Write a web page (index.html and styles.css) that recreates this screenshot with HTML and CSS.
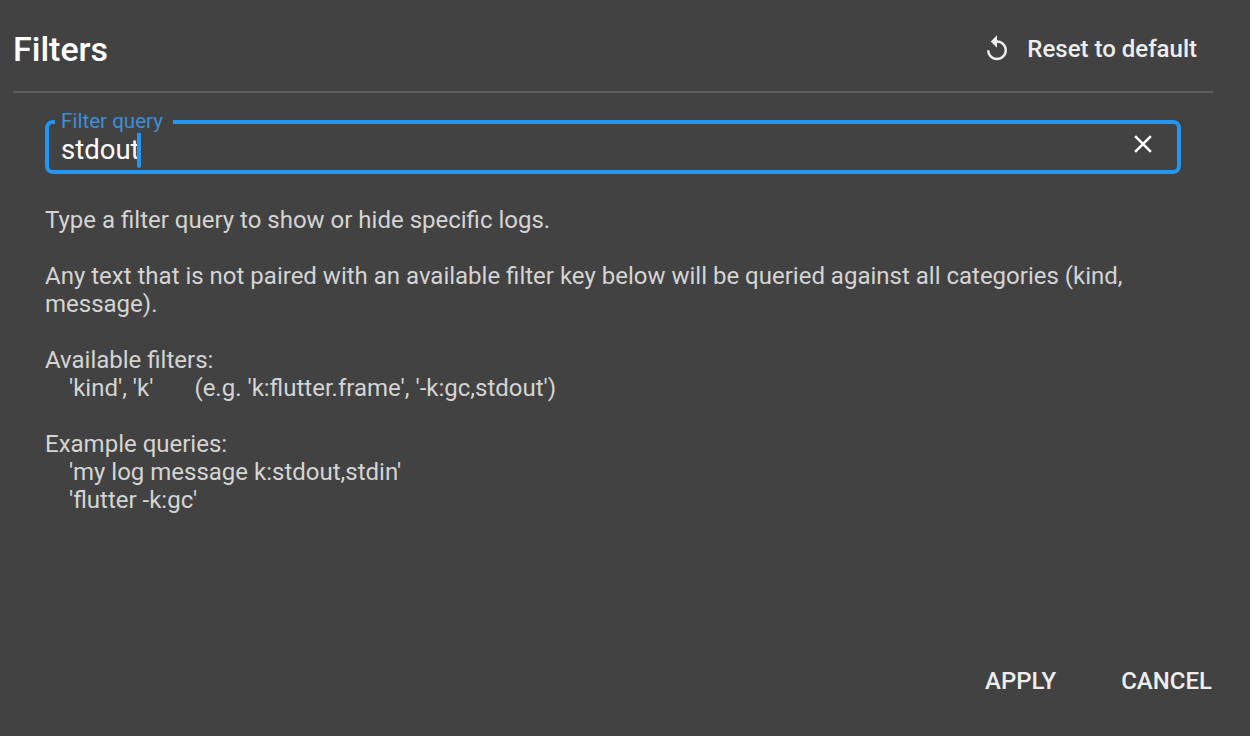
FILE: index.html
```html
<!DOCTYPE html>
<html lang="en">
<head>
  <meta charset="UTF-8" />
  <title>Filters</title>
  <link rel="stylesheet" href="styles.css">
</head>
<body>
  <div class="dialog">
    <div class="header">
      <h2>Filters</h2>
      <div class="reset">
        <svg class="reset-icon" viewBox="0 0 24 24" width="30" height="30"><path d="M12 5V1L7 6l5 5V7c3.31 0 6 2.69 6 6s-2.69 6-6 6-6-2.69-6-6H4c0 4.42 3.58 8 8 8s8-3.58 8-8-3.58-8-8-8z"/></svg>
        <span>Reset to default</span>
      </div>
    </div>
    <div class="content">
      <div class="field">
        <label class="field-label">Filter query</label>
        <div class="field-value"><span>stdout</span><i class="caret"></i></div>
        <svg class="clear-icon" viewBox="0 0 24 24" width="30" height="30"><path d="M19 6.41 17.59 5 12 10.59 6.41 5 5 6.41 10.59 12 5 17.59 6.41 19 12 13.41 17.59 19 19 17.59 13.41 12z"/></svg>
      </div>
      <div class="help">
        <p>Type a filter query to show or hide specific logs.</p>
        <p>Any text that is not paired with an available filter key below will be queried against all categories (kind, message).</p>
        <p>Available filters:<br><span class="indent">'kind', 'k'</span><span class="example">(e.g. 'k:flutter.frame', '-k:gc,stdout')</span></p>
        <p>Example queries:<br><span class="indent">'my log message k:stdout,stdin'</span><br><span class="indent">'flutter -k:gc'</span></p>
      </div>
    </div>
    <div class="actions">
      <button>APPLY</button>
      <button>CANCEL</button>
    </div>
  </div>
</body>
</html>
```

FILE: styles.css
```css
html, body {
  margin: 0;
  height: 100%;
}
body {
  background: #424242;
  font-family: Roboto, "Liberation Sans", sans-serif;
  color: #fff;
  overflow: hidden;
}
.dialog {
  height: 736px;
  box-sizing: border-box;
  padding: 0 37px 0 13px;
  display: flex;
  flex-direction: column;
}
.header {
  height: 93px;
  box-sizing: border-box;
  border-bottom: 2px solid #5e5e5e;
  display: flex;
  justify-content: space-between;
  align-items: center;
  padding-top: 7px;
}
h2 {
  margin: 0;
  font-size: 34px;
  font-weight: 500;
}
.reset {
  display: flex;
  align-items: center;
  gap: 15px;
  margin-right: 16px;
  font-size: 24px;
  font-weight: 500;
  color: #eee;
}
.reset-icon {
  fill: #eee;
}
.content {
  padding: 27px 32px 0;
  flex: 1;
}
.field {
  position: relative;
  height: 54px;
  box-sizing: border-box;
  border: 4px solid #2196f3;
  border-radius: 8px;
  display: flex;
  align-items: center;
  justify-content: space-between;
  padding: 0 19px 0 12px;
}
.field-label {
  position: absolute;
  left: 6px;
  top: -15px;
  padding: 0 10px 0 6px;
  background: #424242;
  color: #3d8fd6;
  font-size: 20.6px;
  line-height: 24px;
}
.field-value {
  display: flex;
  align-items: center;
  font-size: 27.5px;
  line-height: 36px;
  margin-top: 6px;
}
.caret {
  width: 4px;
  height: 36px;
  margin-left: -3px;
  background: #2196f3;
  border-radius: 2px;
}
.clear-icon {
  fill: #fff;
  margin-top: -6px;
}
.help {
  margin-top: 32px;
  font-size: 24px;
  line-height: 28px;
  color: #d4d4d4;
}
.help p {
  margin: 0 0 28px;
}
.indent {
  margin-left: 24px;
}
.example {
  margin-left: 41px;
}
.actions {
  display: flex;
  justify-content: flex-end;
  gap: 65px;
  padding: 0 1px 39px 0;
}
button {
  padding: 0;
  border: 0;
  background: none;
  color: #eee;
  font-family: inherit;
  font-size: 24px;
  font-weight: 500;
  line-height: 32px;
}
```
